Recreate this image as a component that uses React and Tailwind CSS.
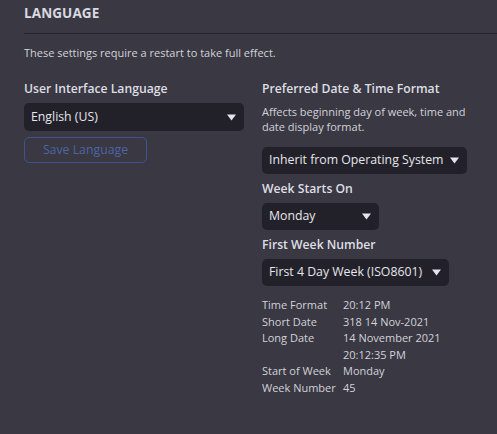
import React from "react";

function Arrow() {
  return (
    <svg width="9" height="7" viewBox="0 0 9 7" className="shrink-0">
      <path d="M0 0.5 L9 0.5 L4.5 6.5 Z" fill="#e4e4ea" />
    </svg>
  );
}

function Select({ value, className }) {
  return (
    <div
      className={
        "flex items-center justify-between h-[27px] rounded-[5px] bg-[#22212a] pl-[7px] pr-[8px] text-[12.3px] text-[#e6e6eb] " +
        className
      }
    >
      <span className="whitespace-nowrap">{value}</span>
      <Arrow />
    </div>
  );
}

export default function App() {
  const rows = [
    ["Time Format", ["20:12 PM"]],
    ["Short Date", ["318 14 Nov-2021"]],
    ["Long Date", ["14 November 2021", "20:12:35 PM"]],
    ["Start of Week", ["Monday"]],
    ["Week Number", ["45"]],
  ];
  return (
    <div
      className="w-[497px] h-[434px] bg-[#393843] text-[#dcdce2] overflow-hidden"
      style={{ fontFamily: '"Open Sans", "Noto Sans", sans-serif' }}
    >
      <div className="pl-[24px] pt-[3px]">
        <h1 className="text-[13.5px] font-bold tracking-[0.1px] text-[#d9d9e0] leading-[20px]">LANGUAGE</h1>
        <div className="mt-[10px] h-px bg-[#25242c]" />
        <p className="mt-[11px] text-[11px] leading-[16px] text-[#d2d2d8]">
          These settings require a restart to take full effect.
        </p>
        <div className="flex mt-[19px]">
          <div className="w-[238px] flex flex-col">
            <div className="text-[12.2px] font-semibold leading-[17px] text-[#dedee4]">User Interface Language</div>
            <Select value="English (US)" className="mt-[6px] w-[220px] h-[28px]" />
            <button className="mt-[6px] w-[123px] h-[26px] rounded-[5px] border border-[#3c5590] text-[12.3px] text-[#4c65a3] text-center">
              Save Language
            </button>
          </div>
          <div className="flex flex-col">
            <div className="text-[12.2px] font-semibold leading-[17px] text-[#dedee4]">Preferred Date &amp; Time Format</div>
            <p className="mt-[7px] text-[11px] leading-[15px] text-[#d2d2d8] w-[215px]">
              Affects beginning day of week, time and date display format.
            </p>
            <Select value="Inherit from Operating System" className="mt-[13px] w-[205px]" />
            <div className="mt-[6px] text-[12.2px] font-semibold leading-[17px] text-[#dedee4]">Week Starts On</div>
            <Select value="Monday" className="mt-[6px] w-[117px]" />
            <div className="mt-[6px] text-[12.2px] font-semibold leading-[17px] text-[#dedee4]">First Week Number</div>
            <Select value="First 4 Day Week (ISO8601)" className="mt-[6px] w-[187px]" />
            <div className="mt-[11px] grid grid-cols-[81px_auto] text-[11px] leading-[16.6px] text-[#d2d2d8]">
              {rows.map(([k, v]) => (
                <React.Fragment key={k}>
                  <div className="whitespace-nowrap">{k}</div>
                  <div>
                    {v.map((l) => (
                      <div key={l}>{l}</div>
                    ))}
                  </div>
                </React.Fragment>
              ))}
            </div>
          </div>
        </div>
      </div>
    </div>
  );
}
